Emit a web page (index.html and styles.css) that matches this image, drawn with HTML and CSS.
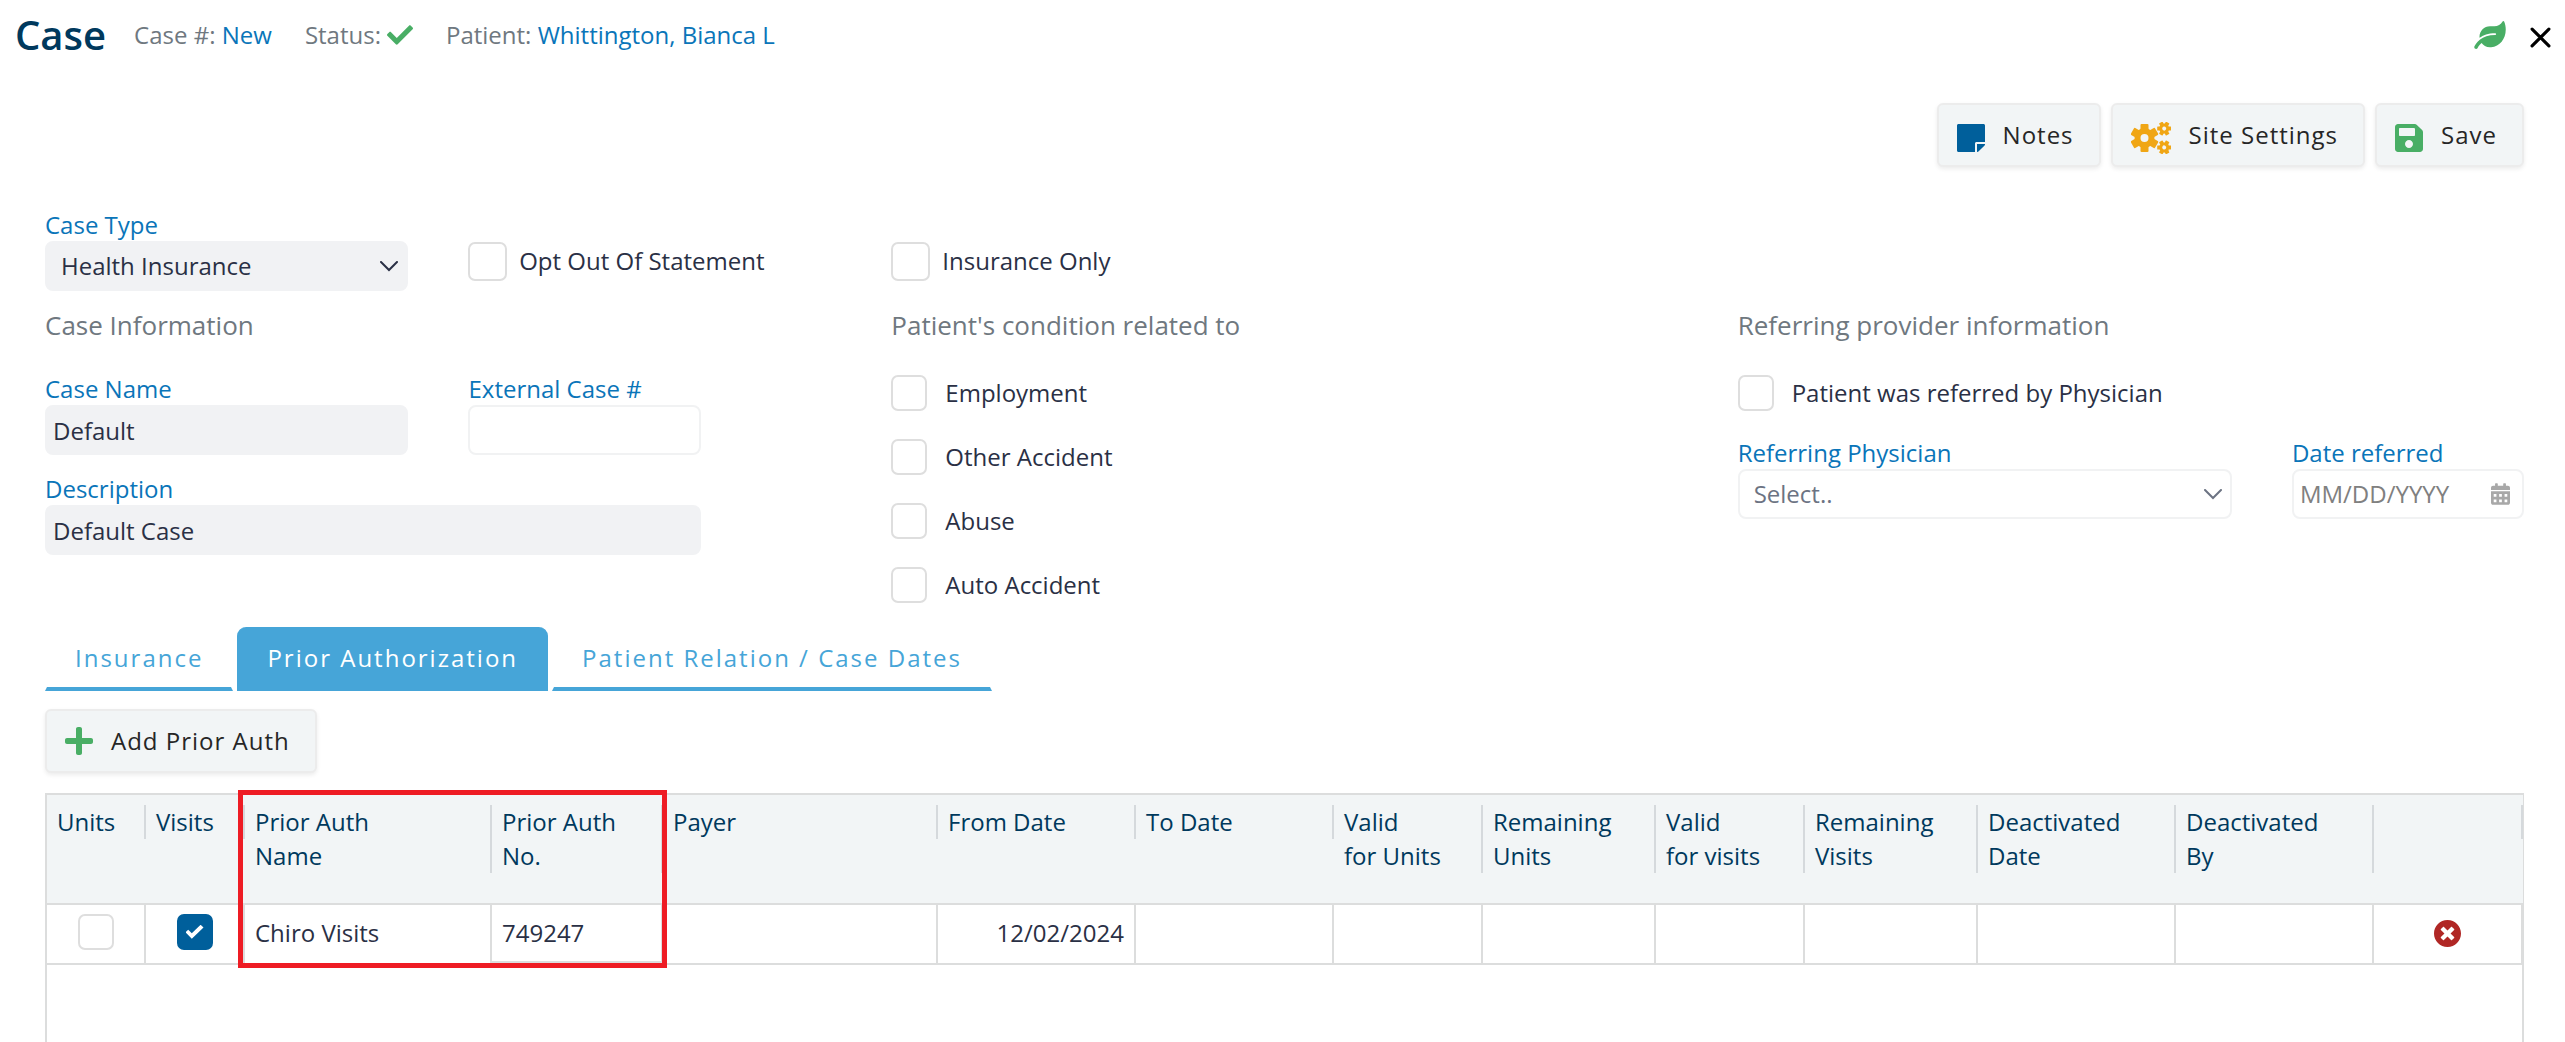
FILE: index.html
```html
<!DOCTYPE html>
<html lang="en">
<head>
<meta charset="utf-8">
<meta name="viewport" content="width=device-width, initial-scale=1">
<title>Case</title>
<link rel="stylesheet" href="styles.css">
</head>
<body>
<header class="page-header">
  <h1 class="page-title">Case</h1>
  <span class="meta">Case #: <a href="#case">New</a></span>
  <span class="meta meta-status">Status:
    <svg class="status-icon" viewBox="0 0 512 512" role="img" aria-label="Active"><path d="M173.898 439.404l-166.4-166.4c-9.997-9.997-9.997-26.206 0-36.204l36.203-36.204c9.997-9.998 26.207-9.998 36.204 0L192 312.69 432.095 72.596c9.997-9.997 26.207-9.997 36.204 0l36.203 36.204c9.997 9.997 9.997 26.206 0 36.204l-294.4 294.401c-9.998 9.997-26.207 9.997-36.204-.001z"/></svg>
  </span>
  <span class="meta">Patient: <a href="#patient">Whittington, Bianca L</a></span>
  <div class="header-actions">
    <svg class="leaf-icon" viewBox="0 0 576 512" aria-hidden="true"><path d="M546.2 9.7c-5.6-12.5-21.6-13-28.3-1.2C486.9 62.4 431.4 96 368 96h-80C182 96 96 182 96 288c0 7 .8 13.7 1.5 20.5C161.3 262.8 253.4 224 384 224c8.8 0 16 7.2 16 16s-7.2 16-16 16C132.6 256 26 410.1 2.4 468c-6.6 16.3 1.2 34.9 17.5 41.6 16.4 6.8 35-1.1 41.8-17.3 1.5-3.6 20.9-47.9 71.9-90.6 32.4 43.9 94 85.8 174.9 77.2C465.5 467.5 576 326.7 576 154.3c0-50.2-10.8-102.2-29.8-144.6z"/></svg>
    <button class="icon-button" type="button" aria-label="Close">
      <svg class="close-icon" viewBox="0 0 20 20" aria-hidden="true"><path d="M2 2l16 16M18 2L2 18"/></svg>
    </button>
  </div>
</header>

<main class="page">
  <div class="toolbar">
    <button class="button" type="button">
      <svg class="button-icon icon-blue" viewBox="0 32 448 448" aria-hidden="true"><path d="M312 320h136V56c0-13.3-10.7-24-24-24H24C10.7 32 0 42.7 0 56v400c0 13.3 10.7 24 24 24h264V344c0-13.2 10.8-24 24-24zm129 55l-98 98c-4.5 4.5-10.6 7-17 7h-6V352h128v6.1c0 6.3-2.5 12.4-7 16.9z"/></svg>
      Notes
    </button>
    <button class="button" type="button">
      <svg class="button-icon icon-gears" viewBox="0 0 40 32" aria-hidden="true">
        <defs>
          <g id="gear">
            <circle r="7" fill="none" stroke="#f0a615" stroke-width="6"/>
            <g id="teeth">
              <rect x="-4" y="-14" width="8" height="6" rx="1"/>
              <rect x="-4" y="8" width="8" height="6" rx="1"/>
            </g>
            <use href="#teeth" transform="rotate(60)"/>
            <use href="#teeth" transform="rotate(120)"/>
          </g>
        </defs>
        <use href="#gear" transform="translate(13.5 16)"/>
        <use href="#gear" transform="translate(33.2 6.6) rotate(30) scale(.5)"/>
        <use href="#gear" transform="translate(33.2 25.4) rotate(30) scale(.5)"/>
      </svg>
      Site Settings
    </button>
    <button class="button" type="button">
      <svg class="button-icon icon-green" viewBox="0 32 448 448" aria-hidden="true"><path d="M433.941 129.941l-83.882-83.882A48 48 0 0 0 316.118 32H48C21.49 32 0 53.49 0 80v352c0 26.51 21.49 48 48 48h352c26.51 0 48-21.49 48-48V163.882a48 48 0 0 0-14.059-33.941zM224 416c-35.346 0-64-28.654-64-64 0-35.346 28.654-64 64-64s64 28.654 64 64c0 35.346-28.654 64-64 64zm96-304.52V212c0 6.627-5.373 12-12 12H76c-6.627 0-12-5.373-12-12V108c0-6.627 5.373-12 12-12h228.52c3.183 0 6.235 1.264 8.485 3.515l3.48 3.48A11.996 11.996 0 0 1 320 111.48z"/></svg>
      Save
    </button>
  </div>

  <form class="case-form">
    <div class="form-row">
      <div class="field">
        <label for="case-type">Case Type</label>
        <div class="select-wrap filled">
          <select id="case-type"><option>Health Insurance</option></select>
          <svg class="chevron" viewBox="0 0 18 11" aria-hidden="true"><path d="M1 1l8 8 8-8"/></svg>
        </div>
      </div>
      <label class="check check-large"><input type="checkbox">Opt Out Of Statement</label>
      <label class="check check-large"><input type="checkbox">Insurance Only</label>
    </div>

    <div class="sections">
      <section class="section">
        <h2>Case Information</h2>
        <div class="case-fields">
          <div class="field">
            <label for="case-name">Case Name</label>
            <input class="text-input filled" id="case-name" type="text" value="Default">
          </div>
          <div class="field">
            <label for="external-case">External Case #</label>
            <input class="text-input" id="external-case" type="text">
          </div>
          <div class="field field-wide">
            <label for="description">Description</label>
            <input class="text-input filled" id="description" type="text" value="Default Case">
          </div>
        </div>
      </section>

      <section class="section">
        <h2>Patient's condition related to</h2>
        <div class="check-list">
          <label class="check"><input type="checkbox">Employment</label>
          <label class="check"><input type="checkbox">Other Accident</label>
          <label class="check"><input type="checkbox">Abuse</label>
          <label class="check"><input type="checkbox">Auto Accident</label>
        </div>
      </section>

      <section class="section">
        <h2>Referring provider information</h2>
        <div class="check-list check-list-tight">
          <label class="check"><input type="checkbox">Patient was referred by Physician</label>
          <div class="referral-fields">
            <div class="field">
              <label for="physician">Referring Physician</label>
              <div class="select-wrap muted">
                <select id="physician"><option>Select..</option></select>
                <svg class="chevron" viewBox="0 0 18 11" aria-hidden="true"><path d="M1 1l8 8 8-8"/></svg>
              </div>
            </div>
            <div class="field">
              <label for="date-referred">Date referred</label>
              <div class="date-wrap">
                <input id="date-referred" type="text" placeholder="MM/DD/YYYY">
                <svg class="calendar-icon" viewBox="0 0 448 512" aria-hidden="true"><path fill-rule="evenodd" d="M400 64h-48V16c0-8.800-7.200-16-16-16h-32c-8.800 0-16 7.200-16 16v48H160V16c0-8.800-7.200-16-16-16h-32c-8.800 0-16 7.200-16 16v48H48C21.500 64 0 85.500 0 112v48h448v-48c0-26.500-21.500-48-48-48zM0 192v272c0 26.500 21.500 48 48 48h352c26.500 0 48-21.500 48-48V192zM64 256h64v64H64zM192 256h64v64h-64zM320 256h64v64h-64zM64 384h64v64H64zM192 384h64v64h-64zM320 384h64v64h-64z"/></svg>
              </div>
            </div>
          </div>
        </div>
      </section>
    </div>
  </form>

  <nav class="tabs" role="tablist">
    <button class="tab" type="button" role="tab" aria-selected="false">Insurance</button>
    <button class="tab" type="button" role="tab" aria-selected="true">Prior Authorization</button>
    <button class="tab" type="button" role="tab" aria-selected="false">Patient Relation / Case Dates</button>
  </nav>

  <div class="panel-actions">
    <button class="button" type="button">
      <svg class="button-icon icon-green" viewBox="0 32 448 448" aria-hidden="true"><path d="M416 208H272V64c0-17.67-14.33-32-32-32h-32c-17.67 0-32 14.33-32 32v144H32c-17.67 0-32 14.33-32 32v32c0 17.67 14.33 32 32 32h144v144c0 17.67 14.33 32 32 32h32c17.67 0 32-14.33 32-32V304h144c17.67 0 32-14.33 32-32v-32c0-17.67-14.33-32-32-32z"/></svg>
      Add Prior Auth
    </button>
  </div>

  <div class="grid">
    <table class="auth-table">
      <colgroup>
        <col class="w-99"><col class="w-99"><col class="w-247"><col class="w-171"><col class="w-275">
        <col class="w-198"><col class="w-198"><col class="w-149"><col class="w-173"><col class="w-149">
        <col class="w-173"><col class="w-198"><col class="w-198"><col class="w-149">
      </colgroup>
      <thead>
        <tr>
          <th scope="col"><div>Units</div></th>
          <th scope="col"><div>Visits</div></th>
          <th scope="col"><div>Prior Auth<br>Name</div></th>
          <th scope="col"><div>Prior Auth<br>No.</div></th>
          <th scope="col"><div>Payer</div></th>
          <th scope="col"><div>From Date</div></th>
          <th scope="col"><div>To Date</div></th>
          <th scope="col"><div>Valid<br>for Units</div></th>
          <th scope="col"><div>Remaining<br>Units</div></th>
          <th scope="col"><div>Valid<br>for visits</div></th>
          <th scope="col"><div>Remaining<br>Visits</div></th>
          <th scope="col"><div>Deactivated<br>Date</div></th>
          <th scope="col"><div>Deactivated<br>By</div></th>
          <td><div></div></td>
        </tr>
      </thead>
      <tbody>
        <tr>
          <td class="center"><input type="checkbox" aria-label="Units"></td>
          <td class="center"><input type="checkbox" aria-label="Visits" checked></td>
          <td>Chiro Visits</td>
          <td class="active-cell">749247</td>
          <td></td>
          <td class="right">12/02/2024</td>
          <td></td><td></td><td></td><td></td><td></td><td></td><td></td>
          <td class="center">
            <button class="icon-button" type="button" aria-label="Delete">
              <svg class="delete-icon" viewBox="8 8 496 496" aria-hidden="true"><path d="M256 8C119 8 8 119 8 256s111 248 248 248 248-111 248-248S393 8 256 8zm121.6 313.1c4.7 4.7 4.7 12.3 0 17L338 377.6c-4.7 4.7-12.3 4.7-17 0L256 312l-65.1 65.6c-4.7 4.7-12.3 4.7-17 0L134.400 338c-4.7-4.7-4.7-12.3 0-17l65.6-65-65.6-65.1c-4.7-4.7-4.7-12.3 0-17l39.6-39.6c4.7-4.7 12.3-4.7 17 0l65 65.7 65.1-65.6c4.7-4.7 12.3-4.7 17 0l39.6 39.6c4.7 4.7 4.7 12.3 0 17L312 256l65.6 65.1z"/></svg>
            </button>
          </td>
        </tr>
      </tbody>
    </table>
    <div class="highlight"></div>
  </div>
</main>
</body>
</html>
```
FILE: styles.css
```css
* {
  box-sizing: border-box;
}

:root {
  --ink: #2a3045;
  --navy: #00395d;
  --link: #0a75b9;
  --muted: #6f7880;
  --tab: #46a5d8;
  --green: #49ae65;
  --fill: #f1f2f4;
  --surface: #f2f5f6;
  --line: #dcdddd;
}

body {
  margin: 0;
  min-height: 100vh;
  display: flex;
  flex-direction: column;
  background: #fff;
  color: var(--ink);
  font: 24px/34px "Open Sans", "Noto Sans", sans-serif;
}

button,
input,
select {
  font: inherit;
  color: inherit;
}

a {
  color: var(--link);
  text-decoration: none;
}

/* Header */
.page-header {
  display: flex;
  align-items: center;
  height: 70px;
  padding: 0 14px 0 15px;
}

.page-title {
  margin: 0 28px 0 0;
  color: var(--navy);
  font-size: 40px;
  font-weight: 600;
}

.meta {
  margin-right: 33px;
  color: var(--muted);
}

.meta-status {
  display: flex;
  align-items: center;
  gap: 6px;
}

.status-icon {
  width: 26px;
  height: 26px;
  fill: var(--green);
}

.header-actions {
  display: flex;
  align-items: center;
  gap: 24px;
  margin-left: auto;
}

.leaf-icon {
  width: 32px;
  height: 28px;
  fill: var(--green);
}

.icon-button {
  display: inline-flex;
  padding: 0;
  border: 0;
  background: none;
}

.close-icon {
  width: 21px;
  height: 21px;
  margin-top: 4px;
  fill: none;
  stroke: #000;
  stroke-width: 3;
  stroke-linecap: round;
}

.page {
  flex: 1;
  display: flex;
  flex-direction: column;
  padding: 33px 41px 0 45px;
}

/* Buttons */
.toolbar {
  display: flex;
  justify-content: flex-end;
  gap: 10px;
}

.button {
  display: flex;
  align-items: center;
  gap: 18px;
  height: 64px;
  padding: 0 25px 0 18px;
  border: 2px solid #ececec;
  border-radius: 6px;
  background: var(--surface);
  box-shadow: 0 2px 4px rgba(0, 0, 0, .08);
  color: #262626;
  letter-spacing: 1px;
}

.button-icon {
  width: 28px;
  height: 28px;
}

.toolbar .button-icon {
  margin-top: 6px;
}

.button .icon-gears {
  width: 40px;
  height: 32px;
  fill: #f0a615;
}

.icon-blue {
  fill: #005f9b;
}

.icon-green {
  fill: var(--green);
}

/* Form */
.case-form {
  margin-top: 42px;
}

.form-row,
.sections {
  display: grid;
  grid-template-columns: repeat(6, minmax(0, 1fr));
  column-gap: 60px;
}

.section {
  grid-column: span 2;
}

.section h2 {
  margin: 16px 0 30px;
  color: var(--muted);
  font-size: 26px;
  font-weight: 400;
  line-height: 36px;
}

.field label {
  display: block;
  color: var(--link);
  line-height: 32px;
}

.text-input,
.select-wrap,
.date-wrap {
  display: flex;
  align-items: center;
  width: 100%;
  height: 50px;
  border: 2px solid #f1f2f3;
  border-radius: 8px;
  background: #fff;
}

.text-input {
  padding: 0 6px;
}

.filled {
  border-color: var(--fill);
  background: var(--fill);
}

.select-wrap {
  position: relative;
}

.select-wrap select {
  width: 100%;
  height: 100%;
  padding: 0 40px 0 14px;
  border: 0;
  background: none;
  appearance: none;
}

.muted {
  color: #6c7383;
}

.chevron {
  position: absolute;
  right: 8px;
  width: 18px;
  height: 11px;
  fill: none;
  stroke: currentColor;
  stroke-width: 2;
  stroke-linecap: round;
  pointer-events: none;
}

.date-wrap {
  padding: 0 12px 0 6px;
}

.date-wrap input {
  flex: 1;
  min-width: 0;
  padding: 0;
  border: 0;
  background: none;
}

.date-wrap input::placeholder {
  color: #808080;
}

.calendar-icon {
  width: 19px;
  height: 22px;
  fill: #a8a8a8;
}

.case-fields {
  display: grid;
  grid-template-columns: minmax(0, 363fr) minmax(0, 232fr);
  gap: 18px 60px;
  width: 83.4%;
}

.field-wide {
  grid-column: span 2;
}

.referral-fields {
  display: grid;
  grid-template-columns: minmax(0, 494fr) minmax(0, 232fr);
  column-gap: 60px;
}

/* Checkboxes */
.check {
  display: flex;
  align-items: center;
  gap: 18px;
}

.check-large {
  gap: 12px;
  padding-top: 22px;
}

.check-list {
  display: flex;
  flex-direction: column;
  gap: 28px;
  padding-top: 2px;
}

.check-list-tight {
  gap: 26px;
}

input[type="checkbox"] {
  display: grid;
  place-items: center;
  flex: none;
  width: 36px;
  height: 36px;
  margin: 0;
  border: 2px solid #dedede;
  border-radius: 7px;
  background: #fff;
  appearance: none;
}

.check-large input[type="checkbox"] {
  width: 39px;
  height: 39px;
}

input[type="checkbox"]:checked {
  border-color: #005f9b;
  background: #005f9b;
}

input[type="checkbox"]:checked::before {
  content: "";
  width: 18px;
  height: 14px;
  background: #fff;
  clip-path: polygon(0 54%, 15% 35%, 35% 60%, 84% 0, 100% 20%, 35% 100%);
}

/* Tabs */
.tabs {
  display: flex;
  gap: 4px;
  margin-top: 24px;
}

.tab {
  height: 64px;
  padding: 2px 28px 0;
  border: 2px solid transparent;
  border-top: 0;
  border-bottom: 4px solid var(--tab);
  background: none;
  color: var(--tab);
  letter-spacing: 2px;
}

.tab[aria-selected="true"] {
  border-color: var(--tab);
  border-radius: 9px 9px 0 0;
  background: var(--tab);
  color: #fff;
}

.panel-actions {
  display: flex;
  margin: 18px 0 20px;
}

/* Prior authorization grid */
.grid {
  position: relative;
  flex: 1;
  border: 2px solid var(--line);
  border-bottom: 0;
}

.auth-table {
  width: 100%;
  table-layout: fixed;
  border-collapse: separate;
  border-spacing: 0;
}

.w-99 { width: 99px; }
.w-149 { width: 149px; }
.w-171 { width: 171px; }
.w-173 { width: 173px; }
.w-198 { width: 198px; }
.w-247 { width: 247px; }
.w-275 { width: 275px; }

.auth-table thead th,
.auth-table thead td {
  height: 110px;
  padding: 10px 0 0;
  border-bottom: 2px solid var(--line);
  background: var(--surface);
  color: var(--navy);
  font-weight: 400;
  text-align: left;
  vertical-align: top;
}

.auth-table thead div {
  min-height: 34px;
  padding-left: 10px;
  border-right: 2px solid #d5d9dc;
}

.auth-table tbody td {
  height: 60px;
  padding: 0 10px 3px;
  border-right: 2px solid var(--line);
  border-bottom: 2px solid var(--line);
}

.auth-table tbody .center {
  padding-bottom: 6px;
  text-align: center;
}

.auth-table tbody .right {
  text-align: right;
}

.center input[type="checkbox"] {
  display: inline-grid;
  vertical-align: middle;
}

.center .icon-button {
  vertical-align: middle;
}

.auth-table .active-cell {
  box-shadow: inset 0 -2px var(--line);
}

.delete-icon {
  width: 27px;
  height: 27px;
  fill: #b02725;
}

/* Callout round the name and number columns */
.highlight {
  position: absolute;
  top: -5px;
  left: 7.72%;
  width: 17.33%;
  height: 178px;
  border: 5px solid #ee1c24;
  pointer-events: none;
}
```
